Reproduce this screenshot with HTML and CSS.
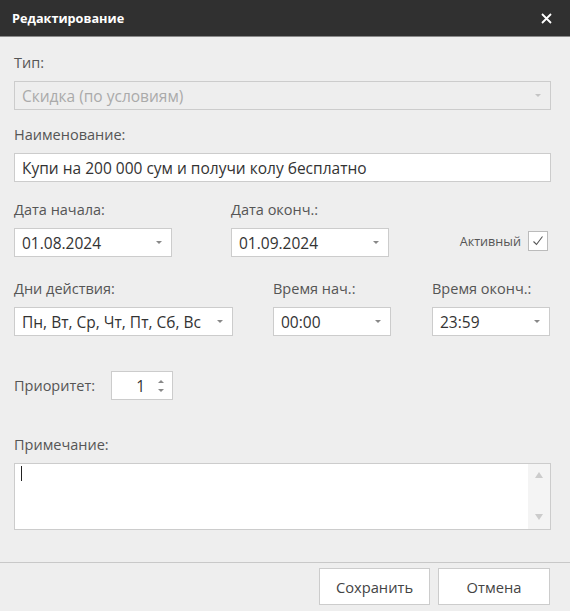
FILE: index.html
```html
<!DOCTYPE html>
<html lang="ru">
<head>
<meta charset="utf-8">
<title>Редактирование</title>
<link rel="stylesheet" href="styles.css">
</head>
<body>
<div class="dialog">
  <div class="titlebar">
    <span class="title">Редактирование</span>
    <svg class="close" width="11" height="11" viewBox="0 0 11 11"><path d="M1 1L10 10M10 1L1 10" stroke="#fff" stroke-width="1.8"/></svg>
  </div>
  <div class="content">
    <div class="label l-type">Тип:</div>
    <div class="field disabled"><span class="val">Скидка (по условиям)</span><span class="arrow light"></span></div>

    <div class="label l-name">Наименование:</div>
    <div class="field"><span class="val">Купи на 200 000 сум и получи колу бесплатно</span></div>

    <div class="row r-dates">
      <div class="col w-date">
        <div class="label">Дата начала:</div>
        <div class="field"><span class="val">01.08.2024</span><span class="arrow"></span></div>
      </div>
      <div class="col w-date">
        <div class="label">Дата оконч.:</div>
        <div class="field"><span class="val">01.09.2024</span><span class="arrow"></span></div>
      </div>
      <div class="col active-col">
        <span class="small-label">Активный</span>
        <span class="checkbox"><svg width="14" height="14" viewBox="0 0 14 14"><path d="M2.5 7.5L5.5 10.5L11.5 2.5" fill="none" stroke="#555" stroke-width="1.1"/></svg></span>
      </div>
    </div>

    <div class="row r-days">
      <div class="col w-days">
        <div class="label">Дни действия:</div>
        <div class="field"><span class="val">Пн, Вт, Ср, Чт, Пт, Сб, Вс</span><span class="arrow"></span></div>
      </div>
      <div class="col w-time">
        <div class="label">Время нач.:</div>
        <div class="field"><span class="val">00:00</span><span class="arrow"></span></div>
      </div>
      <div class="col w-time">
        <div class="label">Время оконч.:</div>
        <div class="field"><span class="val">23:59</span><span class="arrow"></span></div>
      </div>
    </div>

    <div class="prio-row">
      <span class="prio-label">Приоритет:</span>
      <div class="spinner">
        <span class="num">1</span>
        <span class="spin-btns"><span class="up"></span><span class="down"></span></span>
      </div>
    </div>

    <div class="label l-note">Примечание:</div>
    <div class="textarea">
      <div class="text-area-body"><span class="caret"></span></div>
      <div class="vscroll"><span class="up"></span><span class="down"></span></div>
    </div>
  </div>
  <div class="footer">
    <button class="btn">Сохранить</button>
    <button class="btn">Отмена</button>
  </div>
</div>
</body>
</html>
```
FILE: styles.css
```css
html, body {
  margin: 0;
  padding: 0;
}
body {
  width: 570px;
  height: 611px;
  background: #eeeeee;
  font-family: "Open Sans", "Noto Sans", sans-serif;
  font-size: 14.5px;
  color: #555555;
  overflow: hidden;
}
.dialog {
  width: 570px;
  height: 611px;
  display: flex;
  flex-direction: column;
  background: #eeeeee;
}
.titlebar {
  height: 36px;
  background: #303030;
  border-bottom: 1px solid #8a8a8a;
  display: flex;
  align-items: center;
  justify-content: space-between;
  padding: 0 18px 0 12px;
  flex-shrink: 0;
}
.title {
  color: #ffffff;
  font-weight: 700;
  font-size: 12.7px;
}
.close {
  display: block;
}
.content {
  flex: 1;
  padding: 16px 19px 0 14px;
}
.label {
  height: 20px;
  line-height: 20px;
  margin-bottom: 8px;
  white-space: nowrap;
}
.l-name { margin-top: 15px; }
.field {
  height: 29px;
  box-sizing: border-box;
  border: 1px solid #cccccc;
  background: #ffffff;
  display: flex;
  align-items: center;
  justify-content: space-between;
  padding: 0 9px 0 7px;
  color: #333333;
  font-size: 15.5px;
  white-space: nowrap;
}
.field.disabled {
  background: #eeeeee;
  color: #aaaaaa;
}
.arrow {
  width: 0;
  height: 0;
  border-left: 3.5px solid transparent;
  border-right: 3.5px solid transparent;
  border-top: 3.5px solid #888888;
}
.arrow.light {
  border-top-color: #c4c4c4;
}
.row {
  display: flex;
}
.r-dates {
  margin-top: 18px;
  gap: 59px;
}
.r-days {
  margin-top: 22px;
  gap: 40px;
}
.w-date { width: 158px; }
.w-days { width: 219px; }
.w-time { width: 118px; }
.r-days .w-time + .w-time { margin-left: 1px; }
.active-col {
  flex: 1;
  display: flex;
  justify-content: flex-end;
  align-items: center;
  gap: 7px;
  padding-top: 31px;
  height: 20px;
  padding-right: 3px;
}
.small-label {
  font-size: 12.6px;
  color: #555555;
}
.checkbox {
  width: 20px;
  height: 20px;
  box-sizing: border-box;
  border: 1px solid #bbbbbb;
  background: #ffffff;
  display: flex;
  align-items: center;
  justify-content: center;
}
.checkbox svg { display: block; }
.prio-row {
  margin-top: 35px;
  display: flex;
  align-items: center;
  gap: 16px;
}
.spinner {
  width: 62px;
  height: 29px;
  box-sizing: border-box;
  border: 1px solid #cccccc;
  background: #ffffff;
  display: flex;
  align-items: center;
  justify-content: flex-end;
  padding-right: 8px;
  gap: 13px;
  color: #333333;
  font-size: 15.5px;
}
.spin-btns {
  display: flex;
  flex-direction: column;
  gap: 6px;
}
.up, .down {
  width: 0;
  height: 0;
  border-left: 3px solid transparent;
  border-right: 3px solid transparent;
}
.up { border-bottom: 3px solid #888888; }
.down { border-top: 3px solid #888888; }
.l-note { margin-top: 35px; }
.textarea {
  height: 67px;
  box-sizing: border-box;
  border: 1px solid #cccccc;
  background: #ffffff;
  display: flex;
}
.text-area-body {
  flex: 1;
  padding: 2px 0 0 6px;
}
.caret {
  display: block;
  width: 1px;
  height: 15px;
  background: #222222;
}
.vscroll {
  width: 22px;
  background: #f4f4f4;
  display: flex;
  flex-direction: column;
  align-items: center;
  justify-content: space-between;
  padding: 8px 0 9px;
  box-sizing: border-box;
}
.vscroll .up { border-left-width: 4px; border-right-width: 4px; border-bottom: 6px solid #cccccc; }
.vscroll .down { border-left-width: 4px; border-right-width: 4px; border-top: 6px solid #cccccc; }
.footer {
  height: 49px;
  flex-shrink: 0;
  border-top: 1px solid #c8c8c8;
  box-sizing: border-box;
  display: flex;
  justify-content: flex-end;
  align-items: flex-start;
  gap: 8px;
  padding: 5px 20px 0 0;
}
.btn {
  width: 111px;
  height: 37px;
  border: 1px solid #cccccc;
  background: #ffffff;
  font-family: "Open Sans", "Noto Sans", sans-serif;
  font-size: 14.7px;
  color: #444444;
  padding: 0;
}
.btn + .btn { width: 112px; }
```
